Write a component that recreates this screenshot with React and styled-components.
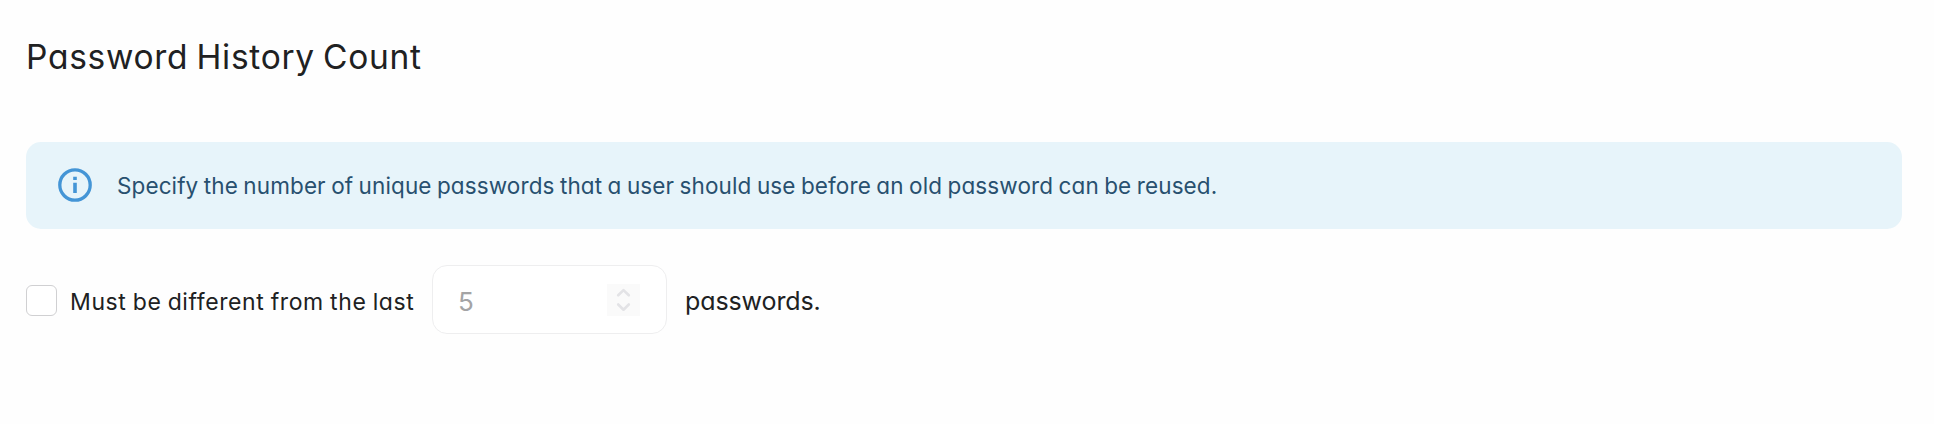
import React from "react";
import styled, { createGlobalStyle } from "styled-components";

const GlobalStyle = createGlobalStyle`
  *, *::before, *::after { box-sizing: border-box; }
  body {
    margin: 0;
    background: #fefefe;
    color: #202122;
    font-family: Inter, "Open Sans", sans-serif;
    font-feature-settings: "cv11" 1;
  }
`;

const Section = styled.section`
  display: flex;
  flex-direction: column;
  padding: 37px 32px 0 26px;
`;

const Title = styled.h2`
  margin: 0 0 65px;
  font-size: 33.5px;
  line-height: 40px;
  font-weight: 400;
  letter-spacing: 0.72px;
  word-spacing: -2px;
  white-space: nowrap;
`;

const Notice = styled.div`
  display: flex;
  align-items: center;
  height: 87px;
  padding: 0 0 1px 32px;
  gap: 25px;
  border-radius: 15px;
  background: #e7f4fa;
  color: #28506f;
`;

const NoticeText = styled.p`
  margin: 0;
  padding-top: 2px;
  font-size: 22.5px;
  line-height: 30px;
  font-weight: 400;
  letter-spacing: 0.11px;
  word-spacing: -1px;
  white-space: nowrap;
`;

const Row = styled.div`
  display: flex;
  align-items: center;
  height: 69px;
  margin-top: 36px;
`;

const Checkbox = styled.input.attrs({ type: "checkbox" })`
  appearance: none;
  width: 31px;
  height: 31px;
  margin: 2px 13px 0 0;
  border: 1px solid #d0d0d2;
  border-radius: 6px;
  background: #fff;
`;

const Label = styled.label`
  width: 362px;
  padding-top: 4px;
  font-size: 23px;
  line-height: 30px;
  font-weight: 400;
  letter-spacing: 0.6px;
  word-spacing: -0.8px;
  white-space: nowrap;
`;

const NumberField = styled.div`
  display: flex;
  align-items: center;
  justify-content: space-between;
  width: 235px;
  height: 69px;
  padding: 1px 26px 0 25px;
  border: 1px solid #eeeeef;
  border-radius: 15px;
  background: #fff;
  color: #a4a4a5;
  font-size: 26px;
  font-weight: 400;
`;

const Amount = styled.span`
  padding-top: 3px;
`;

const Stepper = styled.span`
  display: flex;
  width: 33px;
  height: 32px;
  background: #fafafa;
`;

const Suffix = styled.span`
  margin-left: 18px;
  padding-top: 2px;
  font-size: 25px;
  line-height: 30px;
  font-weight: 400;
  letter-spacing: -0.1px;
  white-space: nowrap;
`;

export default function App() {
  return (
    <>
      <GlobalStyle />
      <Section>
        <Title>Password History Count</Title>
        <Notice>
          <svg width="34" height="34" viewBox="0 0 34 34" fill="none">
            <circle cx="17" cy="17" r="15.2" stroke="#4495d6" strokeWidth="3.3" />
            <path d="M15.2 8.7h3.6v3.4h-3.6zM15.2 14.7h3.6v10.4h-3.6z" fill="#4495d6" />
          </svg>
          <NoticeText>
            Specify the number of unique passwords that a user should use before an old password can be reused.
          </NoticeText>
        </Notice>
        <Row>
          <Checkbox id="history" />
          <Label htmlFor="history">Must be different from the last</Label>
          <NumberField>
            <Amount>5</Amount>
            <Stepper>
              <svg width="33" height="32" viewBox="0 0 33 32" fill="none" stroke="#e3e3e6" strokeWidth="2.6" strokeLinecap="round" strokeLinejoin="round">
                <path d="M11.2 11.3l5.3-5.2 5.3 5.2M11.2 20.5l5.3 5.2 5.3-5.2" />
              </svg>
            </Stepper>
          </NumberField>
          <Suffix>passwords.</Suffix>
        </Row>
      </Section>
    </>
  );
}
